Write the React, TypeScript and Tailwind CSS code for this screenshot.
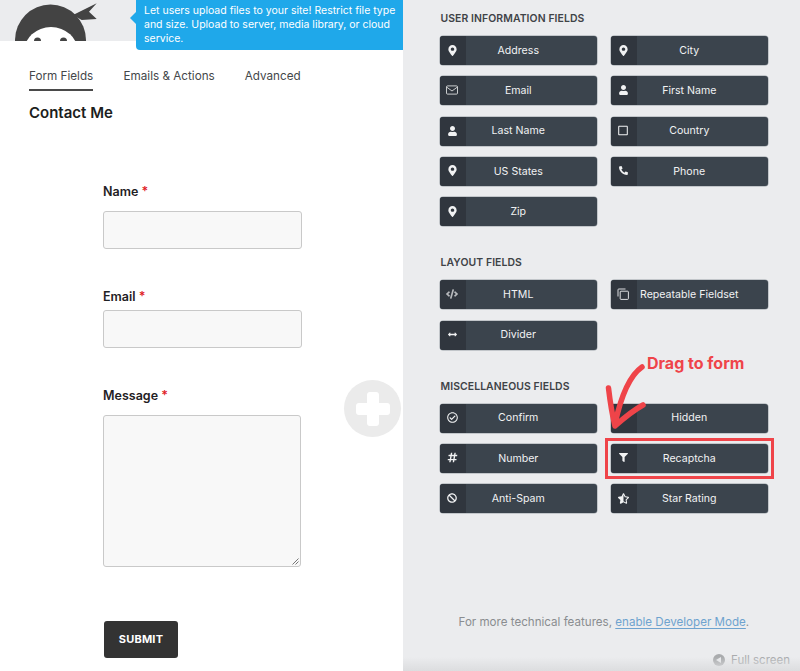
import type { ReactNode } from "react";
import {
  FaMapMarkerAlt,
  FaUser,
  FaRegSquare,
  FaPhoneAlt,
  FaCode,
  FaArrowsAltH,
  FaRegCheckCircle,
  FaHashtag,
  FaBan,
  FaFilter,
  FaStarHalfAlt,
} from "react-icons/fa";

type Field = { label: string; icon: ReactNode; marked?: boolean };

const pin = <FaMapMarkerAlt className="w-[9px] h-[11px]" />;

const envelope = (
  <svg width="12" height="10" viewBox="0 0 12 10" fill="none" stroke="currentColor" strokeWidth="0.8">
    <rect x="0.5" y="0.9" width="11" height="8.2" rx="1" />
    <path d="M0.8 2.2 L6 6 L11.2 2.2" />
  </svg>
);

const copy = (
  <svg width="12" height="12" viewBox="0 0 12 12" fill="none" stroke="currentColor" strokeWidth="0.9">
    <path d="M8.5 1 H1.8 A0.8 0.8 0 0 0 1 1.8 V8.5" />
    <rect x="3.2" y="3.2" width="8.2" height="8.2" rx="0.8" />
  </svg>
);

const userFields: Field[] = [
  { label: "Address", icon: pin },
  { label: "City", icon: pin },
  { label: "Email", icon: envelope },
  { label: "First Name", icon: <FaUser className="w-[9px] h-[10px]" /> },
  { label: "Last Name", icon: <FaUser className="w-[9px] h-[10px]" /> },
  { label: "Country", icon: <FaRegSquare className="w-[10px] h-[11px]" /> },
  { label: "US States", icon: pin },
  { label: "Phone", icon: <FaPhoneAlt className="w-[9px] h-[9px]" /> },
  { label: "Zip", icon: pin },
];

const layoutFields: Field[] = [
  { label: "HTML", icon: <FaCode className="w-[12px] h-[10px] opacity-70" /> },
  { label: "Repeatable Fieldset", icon: copy },
  { label: "Divider", icon: <FaArrowsAltH className="w-[11px] h-[9px]" /> },
];

const miscFields: Field[] = [
  { label: "Confirm", icon: <FaRegCheckCircle className="w-[11px] h-[11px]" /> },
  { label: "Hidden", icon: null },
  { label: "Number", icon: <FaHashtag className="w-[11px] h-[11px]" /> },
  { label: "Recaptcha", icon: <FaFilter className="w-[9px] h-[9px]" />, marked: true },
  { label: "Anti-Spam", icon: <FaBan className="w-[10px] h-[10px]" /> },
  { label: "Star Rating", icon: <FaStarHalfAlt className="w-[11px] h-[11px]" /> },
];

function FieldButton({ label, icon, marked }: Field) {
  return (
    <div className="relative h-[29px] flex rounded-[3px] bg-[#3b444d] text-[#f1f2f3] shadow-[0_0_0_0.5px_#9aa0a6]">
      <div className="w-[26px] shrink-0 flex items-center justify-center bg-[#30363e] rounded-l-[3px] pr-[1px] pb-[1px]">{icon}</div>
      <div className="flex-1 flex items-center justify-center text-[10.6px] pr-[26px] whitespace-nowrap">{label}</div>
      {marked && <div className="absolute -inset-[6px] border-[3px] border-[#ef4449]" />}
    </div>
  );
}

function FieldGroup({ title, fields, className }: { title: string; fields: Field[]; className: string }) {
  return (
    <section className={className}>
      <h3 className="text-[10.4px] leading-[13px] font-semibold text-[#3f4347] uppercase tracking-[0.1px] pl-[1px]">{title}</h3>
      <div className="grid grid-cols-[157.5px_157.5px] gap-x-[13.5px] gap-y-[11.33px] mt-[11px]">
        {fields.map((f) => (
          <FieldButton key={f.label} {...f} />
        ))}
      </div>
    </section>
  );
}

function FormLabel({ children }: { children: ReactNode }) {
  return (
    <label className="block text-[12.5px] leading-[16px] font-semibold text-[#1f2124]">
      {children} <span className="text-[#e0201f]">*</span>
    </label>
  );
}

function Logo() {
  return (
    <svg className="absolute left-0 top-0" width="110" height="41" viewBox="0 0 110 41">
      <circle cx="50.5" cy="40" r="35.5" fill="#434343" />
      <path d="M73 15 L96.7 3.3 L89 11.7 L96.7 19 L81.7 20 Z" fill="#434343" />
      <ellipse cx="51" cy="52" rx="27" ry="25" fill="#ffffff" />
      <circle cx="37.5" cy="41" r="3.5" fill="#434343" />
      <circle cx="63.5" cy="41" r="3.5" fill="#434343" />
    </svg>
  );
}

export default function App() {
  return (
    <div
      className="relative w-[800px] h-[671px] overflow-hidden flex bg-[#ebecee]"
      style={{ fontFamily: "Inter, 'Liberation Sans', sans-serif" }}
    >
      {/* Left panel */}
      <div className="relative w-[403px] shrink-0 flex flex-col bg-white">
        <div className="h-[41px] bg-[#ebecee]" />
        <Logo />

        {/* Tooltip */}
        <div className="absolute left-[135.5px] top-0 w-[267.5px] h-[50px] bg-[#1fa8ea] rounded-bl-[4px] pl-[8.5px] pr-[6px] pt-[4px] text-[10.5px] leading-[14px] text-white">
          Let users upload files to your site! Restrict file type and size. Upload to server, media library, or cloud service.
          <span className="absolute -left-[6px] top-[12px] w-0 h-0 border-y-[6px] border-y-transparent border-r-[6px] border-r-[#1fa8ea]" />
        </div>

        <nav className="flex pl-[29px] mt-[27px] text-[11.7px] leading-[16px] text-[#44474a]">
          <div className="w-[64px] pb-[5px] border-b-[2px] border-[#4a4a4a] whitespace-nowrap">Form Fields</div>
          <div className="ml-[30.5px] whitespace-nowrap">Emails &amp; Actions</div>
          <div className="ml-[30px] whitespace-nowrap">Advanced</div>
        </nav>

        <h2 className="ml-[29px] mt-[11px] text-[15px] leading-[22px] font-semibold text-[#1c1e20]">Contact Me</h2>

        <form className="ml-[103px] mt-[60px] w-[199px]">
          <FormLabel>Name</FormLabel>
          <div className="mt-[11px] h-[38px] rounded-[3px] border border-[#c9c9c9] bg-[#f8f8f8]" />

          <div className="mt-[40px]">
            <FormLabel>Email</FormLabel>
          </div>
          <div className="mt-[5px] h-[38px] rounded-[3px] border border-[#c9c9c9] bg-[#f8f8f8]" />

          <div className="mt-[40px]">
            <FormLabel>Message</FormLabel>
          </div>
          <div className="relative mt-[11px] w-[198px] h-[152px] rounded-[3px] border border-[#c9c9c9] bg-[#f8f8f8]">
            <svg className="absolute right-[1px] bottom-[1px]" width="7" height="7" viewBox="0 0 7 7">
              <path d="M0.5 6.5 L6.5 0.5 M3.5 6.5 L6.5 3.5" stroke="#777777" strokeWidth="1" />
            </svg>
          </div>

          <button
            type="button"
            className="block mt-[54px] ml-[1px] w-[74px] h-[37px] rounded-[3px] bg-[#333333] text-white text-[11px] font-bold tracking-[0.2px]"
          >
            SUBMIT
          </button>
        </form>

        {/* Add button */}
        <div className="absolute left-[344px] top-[380px] w-[57px] h-[57px] rounded-full bg-[#ebebeb] flex items-center justify-center">
          <div className="relative w-[34px] h-[34px]">
            <div className="absolute left-[11px] top-0 w-[12px] h-[34px] rounded-[3px] bg-white" />
            <div className="absolute left-0 top-[11px] w-[34px] h-[12px] rounded-[3px] bg-white" />
          </div>
        </div>
      </div>

      {/* Right panel */}
      <div className="relative flex-1 flex flex-col pl-[36.5px]">
        <FieldGroup title="User Information Fields" fields={userFields} className="mt-[12px]" />
        <FieldGroup title="Layout Fields" fields={layoutFields} className="mt-[30px]" />
        <FieldGroup title="Miscellaneous Fields" fields={miscFields} className="mt-[30px]" />

        <p className="mt-[101px] ml-[19px] text-[11.6px] leading-[16px] text-[#8a8d90] whitespace-nowrap">
          For more technical features,{" "}
          <span className="text-[#6ea3cf] underline underline-offset-2">enable Developer Mode</span>.
        </p>

        {/* Annotation */}
        <div className="absolute left-[244px] top-[354px] text-[16px] leading-[18px] font-bold text-[#ef4449] whitespace-nowrap">
          Drag to form
        </div>
        <svg className="absolute left-[195px] top-[360px]" width="60" height="75" viewBox="0 0 60 75">
          <path
            d="M44 7 C31 16 23 36 17 64 M10.5 28 C12 41 14 54 17 66 C27 57 36 50 45 45"
            fill="none"
            stroke="#ef4449"
            strokeWidth="5.5"
            strokeLinecap="round"
            strokeLinejoin="round"
          />
        </svg>

        {/* Full screen */}
        <div className="absolute right-[10px] top-[652px] flex items-center gap-[6px] text-[11.5px] leading-[16px] text-[#a9abad]">
          <span className="w-[12px] h-[12px] rounded-full bg-[#a9abad] flex items-center justify-center">
            <span className="w-0 h-0 border-y-[3.5px] border-y-transparent border-r-[5px] border-r-[#ebecee] -ml-[1px]" />
          </span>
          Full screen
        </div>
      </div>

      {/* bottom shade of the window */}
      <div className="absolute left-[403px] right-0 bottom-0 h-[14px] bg-linear-to-b from-transparent to-[#dcdddf] pointer-events-none" />
    </div>
  );
}
